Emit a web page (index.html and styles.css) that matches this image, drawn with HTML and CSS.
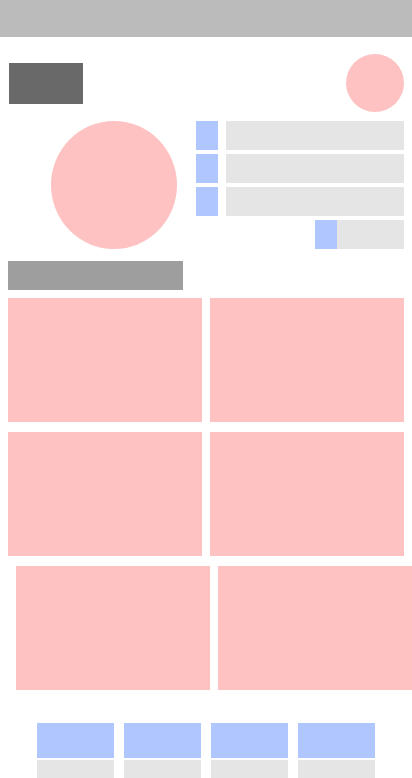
FILE: index.html
```html
<!DOCTYPE html>
<html>
<head>
<meta charset="utf-8">
<link rel="stylesheet" href="styles.css">
</head>
<body>
<div class="topbar"></div>
<div class="brand-row">
  <div class="logo"></div>
  <div class="avatar-sm"></div>
</div>
<div class="profile">
  <div class="avatar-lg"></div>
  <div class="stats">
    <div class="stat"><span class="stat-ic"></span><span class="stat-val"></span></div>
    <div class="stat"><span class="stat-ic"></span><span class="stat-val"></span></div>
    <div class="stat"><span class="stat-ic"></span><span class="stat-val"></span></div>
    <div class="stat stat-short"><span class="stat-ic"></span><span class="stat-val"></span></div>
  </div>
</div>
<div class="heading"></div>
<div class="grid">
  <div class="card"></div><div class="card"></div>
  <div class="card"></div><div class="card"></div>
</div>
<div class="grid grid-shift">
  <div class="card"></div><div class="card"></div>
</div>
<div class="tabs">
  <div class="tab"><div class="tab-ic"></div><div class="tab-lb"></div></div>
  <div class="tab"><div class="tab-ic"></div><div class="tab-lb"></div></div>
  <div class="tab"><div class="tab-ic"></div><div class="tab-lb"></div></div>
  <div class="tab"><div class="tab-ic"></div><div class="tab-lb"></div></div>
</div>
</body>
</html>
```
FILE: styles.css
```css
html, body { margin: 0; padding: 0; background: #fff; font-family: "Liberation Sans", sans-serif; overflow: hidden; }
body { width: 412px; height: 778px; }
.topbar { height: 37px; background: #bbbbbb; }
.brand-row { display: flex; justify-content: space-between; align-items: center; margin-top: 17px; padding: 0 8px 0 9px; }
.logo { width: 74px; height: 41px; background: #696969; }
.avatar-sm { width: 58px; height: 58px; border-radius: 50%; background: #fec2c2; }
.profile { display: flex; margin-top: 9px; padding: 0 8px 0 51px; }
.avatar-lg { width: 126px; height: 128px; border-radius: 50%; background: #fec2c2; flex: none; }
.stats { flex: 1; margin-left: 19px; display: flex; flex-direction: column; gap: 4px; }
.stat { display: flex; height: 29px; gap: 8px; }
.stat-ic { width: 22px; background: #afc6fe; flex: none; }
.stat-val { flex: 1; background: #e5e5e5; }
.stat-short { margin-left: auto; width: 89px; gap: 0; }
.heading { width: 175px; height: 29px; margin: 12px 0 0 8px; background: #9e9e9e; }
.grid { display: grid; grid-template-columns: 194px 194px; column-gap: 8px; row-gap: 10px; margin: 8px 0 0 8px; }
.grid-shift { margin: 10px 0 0 16px; }
.card { height: 124px; background: #fec2c2; }
.tabs { display: flex; justify-content: center; gap: 10px; margin-top: 33px; }
.tab { width: 77px; display: flex; flex-direction: column; gap: 2px; }
.tab-ic { height: 35px; background: #afc6fe; }
.tab-lb { height: 20px; background: #e5e5e5; }
```
